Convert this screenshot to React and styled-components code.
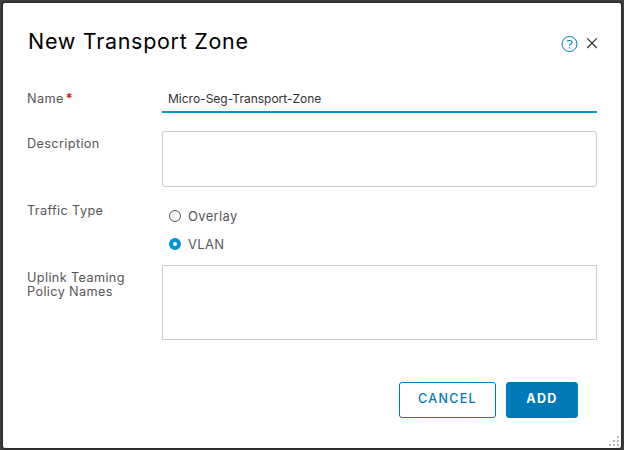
import React, { useState } from "react";
import styled, { createGlobalStyle } from "styled-components";

const GlobalStyle = createGlobalStyle`
  * { box-sizing: border-box; }
  html, body { margin: 0; overflow: hidden; background: #414141; }
  button, input, textarea { font-family: inherit; }
`;

const Backdrop = styled.div`
  width: 624px;
  height: 450px;
  padding: 3px 3px 2px;
  background: #414141;
  font-family: Inter, sans-serif;
  color: #565656;
`;

const Dialog = styled.section`
  position: relative;
  height: 445px;
  display: flex;
  flex-direction: column;
  padding: 22px 24px 30px;
  background: #fff;
  border-radius: 2px;
  box-shadow: 0 0 2px 1px #242424;
`;

const Header = styled.header`
  display: flex;
  justify-content: space-between;
  height: 63px;
`;

const Title = styled.h1`
  margin: 0 0 0 1px;
  font-size: 21.5px;
  line-height: 32px;
  font-weight: 400;
  letter-spacing: 0.7px;
  color: #000;
`;

const HeaderActions = styled.div`
  display: flex;
  gap: 8px;
  padding-top: 10px;
  margin-right: -1px;
`;

const IconButton = styled.button`
  display: block;
  height: 18px;
  padding: 0;
  border: 0;
  background: none;

  svg { display: block; }
`;

const Form = styled.form`
  display: flex;
  flex-direction: column;
`;

const Row = styled.div`
  display: grid;
  grid-template-columns: 135px 435px;
  height: ${(p) => p.$height}px;
  margin-bottom: ${(p) => p.$gap || 0}px;
`;

const Label = styled.label`
  padding-top: ${(p) => p.$top}px;
  font-size: 12.7px;
  line-height: 14px;
  letter-spacing: 0.37px;
`;

const Required = styled.span`
  margin-left: 2px;
  color: #c92100;
  font-weight: 600;
`;

const TextInput = styled.input`
  height: 25px;
  padding: 0 6px 2px;
  border: 0;
  border-bottom: 2px solid #0095d3;
  border-radius: 0;
  outline: 0;
  background: #fff;
  color: #313131;
  font-size: 12px;
  letter-spacing: 0;
`;

const TextArea = styled.textarea`
  height: 100%;
  border: 1px solid #ccc;
  border-radius: ${(p) => p.$radius || 0}px;
  outline: 0;
  resize: none;
`;

const RadioGroup = styled.div`
  display: flex;
  flex-direction: column;
  gap: 14px;
  padding: 6px 0 0 7px;
`;

const RadioOption = styled.label`
  display: flex;
  align-items: center;
  gap: 7px;
  height: 14px;
  font-size: 13px;
  line-height: 14px;
  letter-spacing: 0.35px;
`;

const Radio = styled.input`
  appearance: none;
  width: 12px;
  height: 12px;
  margin: 0;
  border: 1px solid #565656;
  border-radius: 50%;
  background: #fff;

  &:checked { border: 4px solid #0095d3; }
`;

const Footer = styled.footer`
  display: flex;
  justify-content: flex-end;
  gap: 10px;
  margin-top: auto;
  padding-right: 19px;
`;

const Button = styled.button`
  width: ${(p) => p.$width}px;
  height: 36px;
  padding: 0 0 3px;
  border: 1px solid #0079b8;
  border-radius: 3px;
  background: ${(p) => (p.$primary ? "#0079b8" : "#fff")};
  color: ${(p) => (p.$primary ? "#fff" : "#0079b8")};
  font-size: 12.5px;
  font-weight: ${(p) => (p.$primary ? 700 : 500)};
  letter-spacing: 1.3px;
`;

const ResizeGrip = styled.svg`
  position: absolute;
  right: 2px;
  bottom: 2px;
`;

const dots = [[8, 0], [4, 4], [8, 4], [0, 8], [4, 8], [8, 8]];

export default function App() {
  const [name, setName] = useState("Micro-Seg-Transport-Zone");
  const [traffic, setTraffic] = useState("VLAN");
  return (
    <>
      <GlobalStyle />
      <Backdrop>
        <Dialog>
          <Header>
            <Title>New Transport Zone</Title>
            <HeaderActions>
              <IconButton aria-label="Help">
                <svg width="17" height="18" viewBox="0 0 17 18" fill="none" stroke="#0079b8">
                  <circle cx="8.5" cy="9" r="7.5" />
                  <path d="M5.9 6.4C7.5 5 11.2 5 11.1 7.3C11 8.9 8.5 8.6 8.5 10.8M8.5 12.3V13.5" strokeWidth="1.1" />
                </svg>
              </IconButton>
              <IconButton aria-label="Close">
                <svg width="12" height="18" viewBox="0 0 12 18" fill="none" stroke="#313131">
                  <path d="M1.2 3.4L10.8 13M10.8 3.4L1.2 13" strokeWidth="1.2" />
                </svg>
              </IconButton>
            </HeaderActions>
          </Header>
          <Form>
            <Row $height={25} $gap={18}>
              <Label $top={4}>Name<Required>*</Required></Label>
              <TextInput value={name} onChange={(e) => setName(e.target.value)} />
            </Row>
            <Row $height={56} $gap={16}>
              <Label $top={6}>Description</Label>
              <TextArea $radius={3} />
            </Row>
            <Row $height={62}>
              <Label $top={1}>Traffic Type</Label>
              <RadioGroup>
                {["Overlay", "VLAN"].map((type) => (
                  <RadioOption key={type}>
                    <Radio type="radio" name="traffic" checked={traffic === type} onChange={() => setTraffic(type)} />
                    {type}
                  </RadioOption>
                ))}
              </RadioGroup>
            </Row>
            <Row $height={75}>
              <Label $top={6}>Uplink Teaming<br />Policy Names</Label>
              <TextArea />
            </Row>
          </Form>
          <Footer>
            <Button $width={97}>CANCEL</Button>
            <Button $width={72} $primary>ADD</Button>
          </Footer>
          <ResizeGrip width="10" height="10" fill="#b8b8b8">
            {dots.map(([x, y]) => <rect key={`${x}-${y}`} x={x} y={y} width="2" height="2" />)}
          </ResizeGrip>
        </Dialog>
      </Backdrop>
    </>
  );
}
